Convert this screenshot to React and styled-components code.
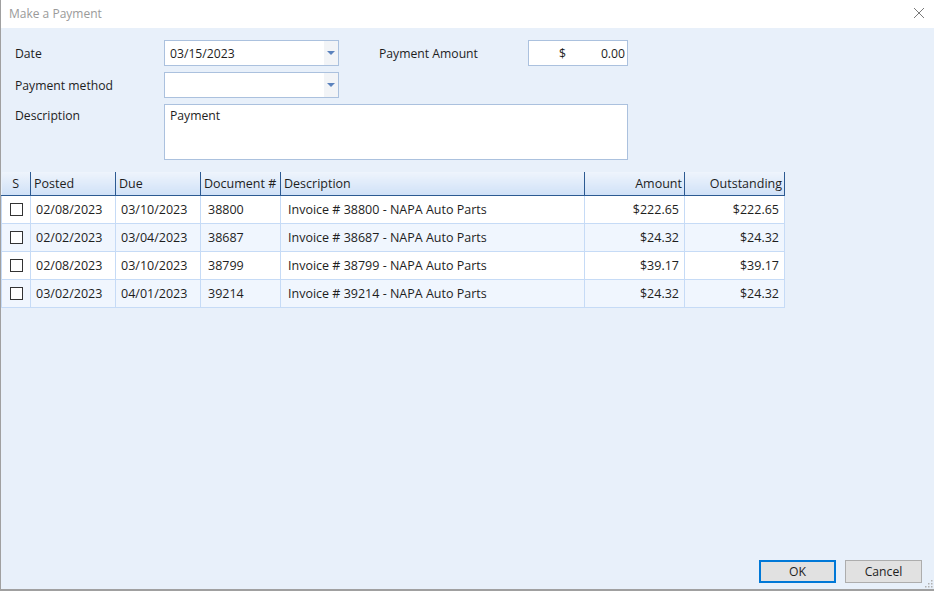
import React from 'react';
import styled, { createGlobalStyle } from 'styled-components';

const GlobalStyle = createGlobalStyle`
  html, body {
    margin: 0;
    padding: 0;
    height: 100%;
    overflow: hidden;
  }
  body {
    font-family: "Segoe UI", "Open Sans", "Noto Sans", sans-serif;
    font-size: 12px;
    color: #1e1e1e;
  }
`;

const Window = styled.div`
  width: 934px;
  height: 591px;
  box-sizing: border-box;
  display: flex;
  flex-direction: column;
  background: #e8f0fa;
  border-left: 1px solid #a0a0a0;
  border-bottom: 2px solid #a0a0a0;
  position: relative;
`;

const TitleBar = styled.div`
  height: 28px;
  flex-shrink: 0;
  display: flex;
  align-items: center;
  justify-content: space-between;
  background: #ffffff;
  padding: 0 8px 2px 8px;
  box-sizing: border-box;
  color: #9a9a9a;
  font-size: 12px;
`;

const CloseIcon = styled.svg`
  width: 12px;
  height: 12px;
  margin-right: 1px;
`;

const Body = styled.div`
  flex: 1;
  display: flex;
  flex-direction: column;
`;

const Form = styled.div`
  display: grid;
  grid-template-columns: 149px 175px 189px 100px;
  grid-template-rows: 26px 26px 56px;
  row-gap: 6px;
  padding: 12px 0 0 14px;
  font-size: 12.2px;
`;

const Label = styled.div`
  display: flex;
  align-items: ${p => (p.top ? 'flex-start' : 'center')};
  padding-top: ${p => (p.top ? '3px' : '1px')};
  padding-left: ${p => p.indent || 0}px;
  white-space: nowrap;
`;

const Combo = styled.div`
  display: flex;
  box-sizing: border-box;
  background: #ffffff;
  border: 1px solid #abc1de;
`;

const ComboText = styled.div`
  flex: 1;
  padding: 0 5px;
  display: flex;
  align-items: center;
`;

const ComboButton = styled.div`
  width: 14px;
  background: #f2f4f7;
  display: flex;
  align-items: center;
  justify-content: center;
`;

const Arrow = styled.div`
  width: 0;
  height: 0;
  border-left: 4px solid transparent;
  border-right: 4px solid transparent;
  border-top: 4px solid #5b82bd;
  margin-top: -1px;
`;

const AmountBox = styled.div`
  box-sizing: border-box;
  background: #ffffff;
  border: 1px solid #abc1de;
  display: flex;
  align-items: center;
  justify-content: space-between;
  padding: 0 2px 0 30px;
`;

const TextArea = styled.div`
  grid-column: 2 / 5;
  box-sizing: border-box;
  background: #ffffff;
  border: 1px solid #abc1de;
  padding: 2px 5px;
`;

const Grid = styled.table`
  margin: 12px 0 0 0;
  border-collapse: collapse;
  table-layout: fixed;
  width: 784px;
  font-size: 12.5px;

  th {
    height: 23px;
    padding: 0 2px 0 3px;
    font-weight: normal;
    text-align: left;
    color: #1e1e1e;
    background: linear-gradient(#eef4fc, #d0e1f7);
    border-right: 1px solid #2c5a92;
    border-bottom: 1px solid #2c5a92;
    white-space: nowrap;
    overflow: hidden;
  }

  th:first-child {
    text-align: center;
    padding: 0;
  }

  td {
    height: 27px;
    padding: 0 5px;
    border: 1px solid #c6dbf6;
    border-top: none;
    white-space: nowrap;
    overflow: hidden;
  }

  tr:nth-child(even) td {
    background: #f0f6fe;
  }

  tr:nth-child(odd) td {
    background: #ffffff;
  }
`;

const HeadCell = styled.th`
  && {
    text-align: ${p => (p.right ? 'right' : 'left')};
  }
`;

const Cell = styled.td`
  && {
    text-align: ${p => (p.right ? 'right' : 'left')};
    padding-left: ${p => p.pl || 5}px;
  }
`;

const Check = styled.div`
  width: 11px;
  height: 11px;
  border: 1px solid #333333;
  background: #ffffff;
  margin: 0 auto;
`;

const Footer = styled.div`
  margin-top: auto;
  display: flex;
  justify-content: flex-end;
  gap: 9px;
  padding: 0 12px 6px 0;
`;

const Button = styled.button`
  width: 77px;
  height: 23px;
  box-sizing: border-box;
  font-family: inherit;
  font-size: 12.2px;
  color: #1e1e1e;
  background: #e1e1e1;
  border: ${p => (p.primary ? '2px solid #0078d7' : '1px solid #adadad')};
  padding: 0;
`;

const Grip = styled.svg`
  position: absolute;
  right: 1px;
  bottom: 1px;
  width: 10px;
  height: 10px;
`;

const invoices = [
  { posted: '02/08/2023', due: '03/10/2023', doc: '38800', amount: '$222.65' },
  { posted: '02/02/2023', due: '03/04/2023', doc: '38687', amount: '$24.32' },
  { posted: '02/08/2023', due: '03/10/2023', doc: '38799', amount: '$39.17' },
  { posted: '03/02/2023', due: '04/01/2023', doc: '39214', amount: '$24.32' },
];

const App = () => (
  <>
    <GlobalStyle />
    <Window>
      <TitleBar>
        <span>Make a Payment</span>
        <CloseIcon viewBox="0 0 12 12">
          <path d="M1 1 L11 11 M11 1 L1 11" stroke="#7a7a7a" strokeWidth="1" />
        </CloseIcon>
      </TitleBar>
      <Body>
        <Form>
          <Label>Date</Label>
          <Combo>
            <ComboText>03/15/2023</ComboText>
            <ComboButton><Arrow /></ComboButton>
          </Combo>
          <Label indent={40}>Payment Amount</Label>
          <AmountBox>
            <span>$</span>
            <span>0.00</span>
          </AmountBox>

          <Label>Payment method</Label>
          <Combo>
            <ComboText />
            <ComboButton><Arrow /></ComboButton>
          </Combo>
          <div />
          <div />

          <Label top>Description</Label>
          <TextArea>Payment</TextArea>
        </Form>

        <Grid>
          <colgroup>
            <col style={{ width: 29 }} />
            <col style={{ width: 85 }} />
            <col style={{ width: 85 }} />
            <col style={{ width: 80 }} />
            <col style={{ width: 304 }} />
            <col style={{ width: 100 }} />
            <col style={{ width: 100 }} />
          </colgroup>
          <thead>
            <tr>
              <HeadCell>S</HeadCell>
              <HeadCell>Posted</HeadCell>
              <HeadCell>Due</HeadCell>
              <HeadCell>Document #</HeadCell>
              <HeadCell>Description</HeadCell>
              <HeadCell right>Amount</HeadCell>
              <HeadCell right>Outstanding</HeadCell>
            </tr>
          </thead>
          <tbody>
            {invoices.map((inv, i) => (
              <tr key={i}>
                <Cell pl={0}><Check /></Cell>
                <Cell>{inv.posted}</Cell>
                <Cell>{inv.due}</Cell>
                <Cell pl={7}>{inv.doc}</Cell>
                <Cell pl={7}>Invoice # {inv.doc} - NAPA Auto Parts</Cell>
                <Cell right>{inv.amount}</Cell>
                <Cell right>{inv.amount}</Cell>
              </tr>
            ))}
          </tbody>
        </Grid>

        <Footer>
          <Button primary>OK</Button>
          <Button>Cancel</Button>
        </Footer>
      </Body>
      <Grip viewBox="0 0 10 10">
        {[[8, 2], [8, 5], [5, 5], [8, 8], [5, 8], [2, 8]].map(([x, y], i) => (
          <rect key={i} x={x} y={y} width="1.5" height="1.5" fill="#b0b0b0" />
        ))}
      </Grip>
    </Window>
  </>
);

export default App;
